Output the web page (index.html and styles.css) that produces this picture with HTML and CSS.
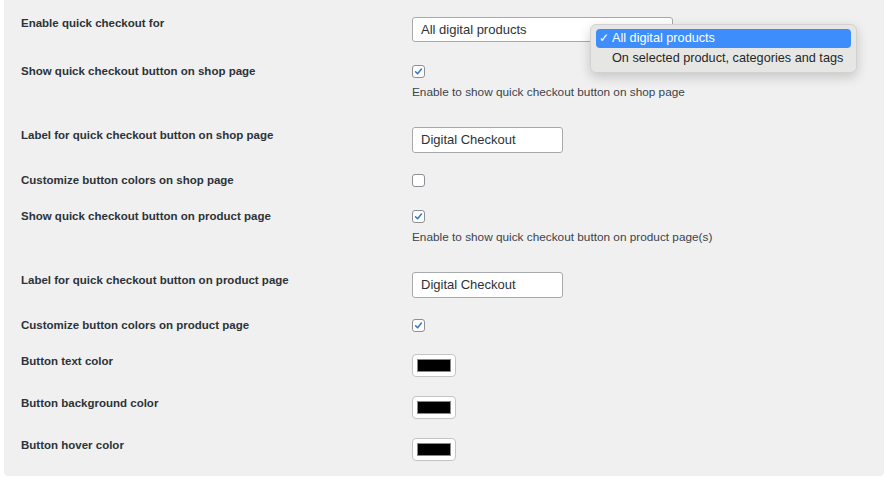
FILE: index.html
```html
<!DOCTYPE html>
<html lang="en">
<head>
    <meta charset="UTF-8">
    <title>Quick Checkout Settings</title>
    <link rel="stylesheet" href="styles.css">
</head>
<body>
    <div class="panel">
        <div class="row row-select">
            <div class="label">Enable quick checkout for</div>
            <div class="field">
                <div class="select-wrap">
                    <div class="select">All digital products</div>
                    <ul class="popup">
                        <li class="active"><span class="tick">&#10003;</span>All digital products</li>
                        <li>On selected product, categories and tags</li>
                    </ul>
                </div>
            </div>
        </div>

        <div class="row row-desc">
            <div class="label">Show quick checkout button on shop page</div>
            <div class="field">
                <span class="check on"><svg viewBox="0 0 13 13"><path d="M3 6.8 L5.4 9.2 L10 3.6"/></svg></span>
                <p class="desc">Enable to show quick checkout button on shop page</p>
            </div>
        </div>

        <div class="row row-input">
            <div class="label">Label for quick checkout button on shop page</div>
            <div class="field"><div class="text-input">Digital Checkout</div></div>
        </div>

        <div class="row row-check">
            <div class="label">Customize button colors on shop page</div>
            <div class="field"><span class="check"></span></div>
        </div>

        <div class="row row-desc">
            <div class="label">Show quick checkout button on product page</div>
            <div class="field">
                <span class="check on"><svg viewBox="0 0 13 13"><path d="M3 6.8 L5.4 9.2 L10 3.6"/></svg></span>
                <p class="desc">Enable to show quick checkout button on product page(s)</p>
            </div>
        </div>

        <div class="row row-input">
            <div class="label">Label for quick checkout button on product page</div>
            <div class="field"><div class="text-input">Digital Checkout</div></div>
        </div>

        <div class="row row-check2">
            <div class="label">Customize button colors on product page</div>
            <div class="field">
                <span class="check on"><svg viewBox="0 0 13 13"><path d="M3 6.8 L5.4 9.2 L10 3.6"/></svg></span>
            </div>
        </div>

        <div class="row row-color">
            <div class="label">Button text color</div>
            <div class="field"><span class="swatch"><span class="swatch-fill"></span></span></div>
        </div>

        <div class="row row-color">
            <div class="label">Button background color</div>
            <div class="field"><span class="swatch"><span class="swatch-fill"></span></span></div>
        </div>

        <div class="row row-last">
            <div class="label">Button hover color</div>
            <div class="field"><span class="swatch"><span class="swatch-fill"></span></span></div>
        </div>
    </div>
</body>
</html>
```

FILE: styles.css
```css
body {
    margin: 0;
    background: #fff;
    font-family: "Liberation Sans", Arial, sans-serif;
    color: #1d2327;
}
.panel {
    width: 880px;
    height: 476px;
    margin-left: 4px;
    padding-top: 17px;
    box-sizing: border-box;
    background: #f0f0f1;
    border-radius: 0 0 4px 4px;
}
.row {
    display: flex;
    align-items: flex-start;
}
.row-select { height: 48px; }
.row-desc { height: 62px; }
.row-input { height: 47px; }
.row-check { height: 36px; }
.row-check2 { height: 35px; }
.row-color { height: 42px; }
.row-last { height: 38px; }
.label {
    width: 408px;
    padding-left: 17px;
    box-sizing: border-box;
    font-size: 11.5px;
    font-weight: 700;
    line-height: 13px;
    color: #2c3338;
}
.row-input .label { padding-top: 2px; }
.row-color .label, .row-last .label { padding-top: 1px; }
.field {
    flex: 1;
}
.select-wrap {
    position: relative;
}
.select {
    width: 261px;
    height: 25px;
    box-sizing: border-box;
    padding: 0 8px;
    background: #fff;
    border: 1px solid #a7aaad;
    border-radius: 3px;
    font-size: 13px;
    line-height: 23px;
    color: #2c3338;
}
.popup {
    position: absolute;
    left: 178px;
    top: 7px;
    width: 267px;
    margin: 0;
    padding: 4px 5px;
    box-sizing: border-box;
    list-style: none;
    background: #e6e6e4;
    border: 1px solid #d2d2d0;
    border-radius: 6px;
    box-shadow: 0 4px 12px rgba(0, 0, 0, 0.18);
}
.popup li {
    height: 19px;
    padding-left: 16px;
    font-size: 12.7px;
    line-height: 19px;
    color: #262626;
    border-radius: 4px;
    position: relative;
}
.popup li + li {
    margin-top: 1px;
}
.popup li.active {
    background: #3d8efc;
    color: #fff;
}
.tick {
    position: absolute;
    left: 3px;
    top: 0;
    font-size: 12px;
}
.check {
    display: block;
    width: 13px;
    height: 13px;
    box-sizing: border-box;
    background: #fff;
    border: 1px solid #8c8f94;
    border-radius: 3px;
}
.check svg {
    display: block;
    width: 11px;
    height: 11px;
}
.check path {
    fill: none;
    stroke: #2f7bc7;
    stroke-width: 1.8;
    stroke-linecap: round;
    stroke-linejoin: round;
}
.desc {
    margin: 8px 0 0;
    font-size: 11.8px;
    line-height: 13px;
    color: #3c434a;
}
.text-input {
    width: 151px;
    height: 26px;
    box-sizing: border-box;
    padding: 0 8px;
    background: #fff;
    border: 1px solid #a7aaad;
    border-radius: 3px;
    font-size: 13px;
    line-height: 24px;
    color: #2c3338;
}
.swatch {
    display: block;
    width: 44px;
    height: 23px;
    box-sizing: border-box;
    padding: 4px;
    background: #fff;
    border: 1px solid #c3c4c7;
    border-radius: 4px;
}
.swatch-fill {
    display: block;
    height: 13px;
    background: #000;
    border: 1px solid #888;
    box-sizing: border-box;
}
```
